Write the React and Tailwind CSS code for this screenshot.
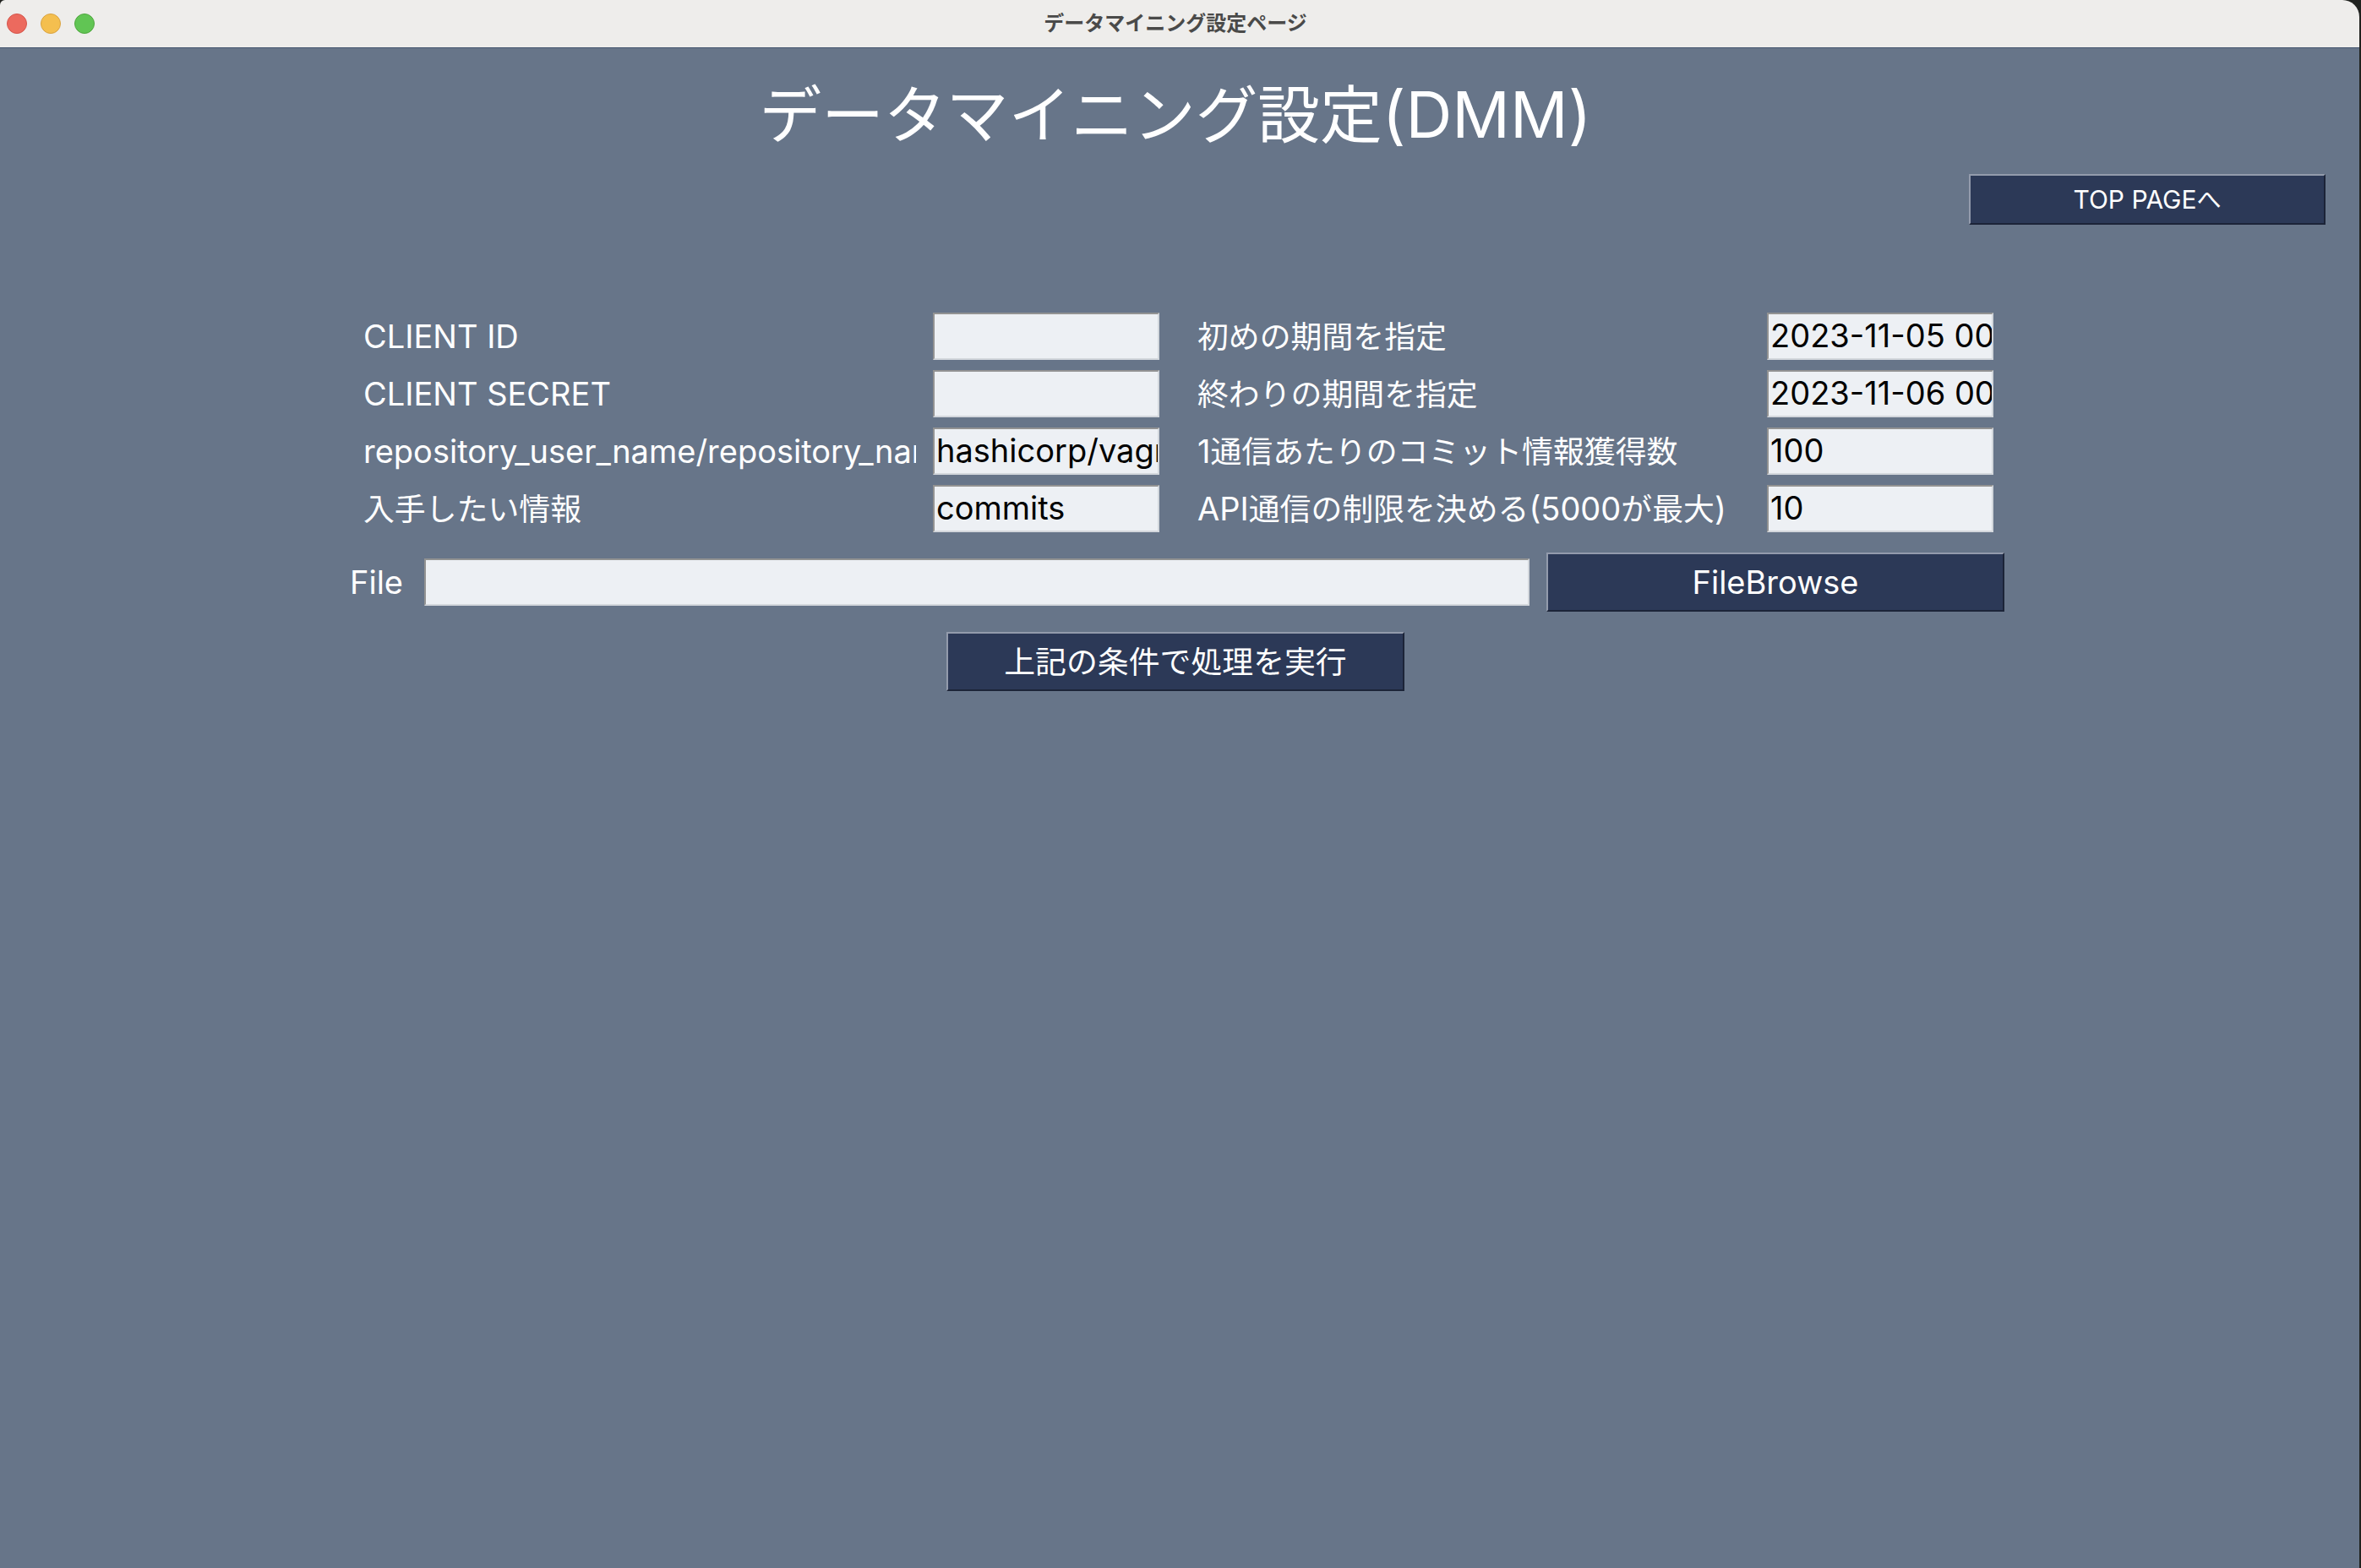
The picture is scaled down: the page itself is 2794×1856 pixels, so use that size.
import React from "react";

const FONT = "font-['Inter','Noto_Sans_CJK_JP',sans-serif]";

// Japanese runs are set slightly smaller than the Latin text around them.
function Mixed({ text }) {
  return text
    .split(/([\x20-\x7e]+)/)
    .filter(Boolean)
    .map((part, i) =>
      /^[\x20-\x7e]/.test(part) ? (
        <span key={i}>{part}</span>
      ) : (
        <span key={i} className="text-[0.97em] leading-none">
          {part}
        </span>
      )
    );
}

const RAISED =
  "border-2 border-t-[#939bac] border-l-[#939bac] border-r-[#1c2438] border-b-[#1c2438] bg-[#2c3957] text-white";
const SUNKEN =
  "h-14 rounded-none border-2 border-t-[#929292] border-l-[#929292] border-r-[#d3d7dc] border-b-[#d3d7dc] bg-[#edf0f4] pl-0.5 pb-0.5 text-[38px] text-black outline-none";

const fields = [
  { id: "client-id", label: "CLIENT ID", value: "" },
  { id: "since", label: "初めの期間を指定", value: "2023-11-05 00:00:00" },
  { id: "client-secret", label: "CLIENT SECRET", value: "" },
  { id: "until", label: "終わりの期間を指定", value: "2023-11-06 00:00:00" },
  { id: "repository", label: "repository_user_name/repository_name", value: "hashicorp/vagrant" },
  { id: "per-page", label: "1通信あたりのコミット情報獲得数", value: "100" },
  { id: "kind", label: "入手したい情報", value: "commits" },
  { id: "limit", label: "API通信の制限を決める(5000が最大)", value: "10" },
];

function Field({ id, label, value }) {
  return (
    <div className="flex items-center gap-5">
      <label
        htmlFor={id}
        className="min-w-0 flex-1 overflow-hidden whitespace-nowrap text-[38px] leading-[56px] text-white"
      >
        <Mixed text={label} />
      </label>
      <input id={id} type="text" defaultValue={value} className={`w-[268px] ${SUNKEN}`} />
    </div>
  );
}

function TitleBar() {
  return (
    <header className="grid h-[57px] grid-cols-[1fr_auto_1fr] items-center rounded-tl-[6px] rounded-tr-[20px] border-b border-[#465770] bg-[#eeedeb] pr-[18px] pl-2">
      <div className="flex gap-4">
        <button type="button" aria-label="閉じる" className="size-6 rounded-full border border-[#d5564c] bg-[#ec6a5e]" />
        <button type="button" aria-label="しまう" className="size-6 rounded-full border border-[#d9a341] bg-[#f4bf4f]" />
        <button type="button" aria-label="拡大" className="size-6 rounded-full border border-[#50a73f] bg-[#61c554]" />
      </div>
      <p className="text-[24px] leading-8 font-bold text-[#4a4a49]">データマイニング設定ページ</p>
      <span />
    </header>
  );
}

export default function App() {
  return (
    <div className={`min-h-screen bg-[#20221f] pr-0.5 ${FONT}`}>
      <div className="flex min-h-screen flex-col">
        <TitleBar />
        <main className="flex-1 bg-[#677589] pr-[10px]">
          <h1 className="pt-5 text-center text-[76px] leading-[116px] text-white">
            <Mixed text="データマイニング設定(DMM)" />
          </h1>
          <div className="flex justify-end pt-[13px] pr-[30px]">
            <button type="button" className={`h-[60px] w-[422px] text-[30px] ${RAISED}`}>
              <Mixed text="TOP PAGEへ" />
            </button>
          </div>
          <form className="mx-auto flex w-full max-w-[1962px] flex-col gap-6 pt-[104px]">
            <div className="grid grid-cols-2 gap-x-[45px] gap-y-3 pr-[13px] pl-5">
              {fields.map((f) => (
                <Field key={f.id} {...f} />
              ))}
            </div>
            <div className="flex items-center pl-1">
              <label htmlFor="file" className="w-[88px] text-[38px] leading-[56px] text-white">
                File
              </label>
              <input id="file" type="text" className={`mr-5 min-w-0 flex-1 ${SUNKEN}`} />
              <button type="button" className={`h-[70px] w-[542px] text-[38px] ${RAISED}`}>
                FileBrowse
              </button>
            </div>
            <button type="button" className={`h-[70px] w-[542px] self-center text-[38px] ${RAISED}`}>
              <Mixed text="上記の条件で処理を実行" />
            </button>
          </form>
        </main>
      </div>
    </div>
  );
}
